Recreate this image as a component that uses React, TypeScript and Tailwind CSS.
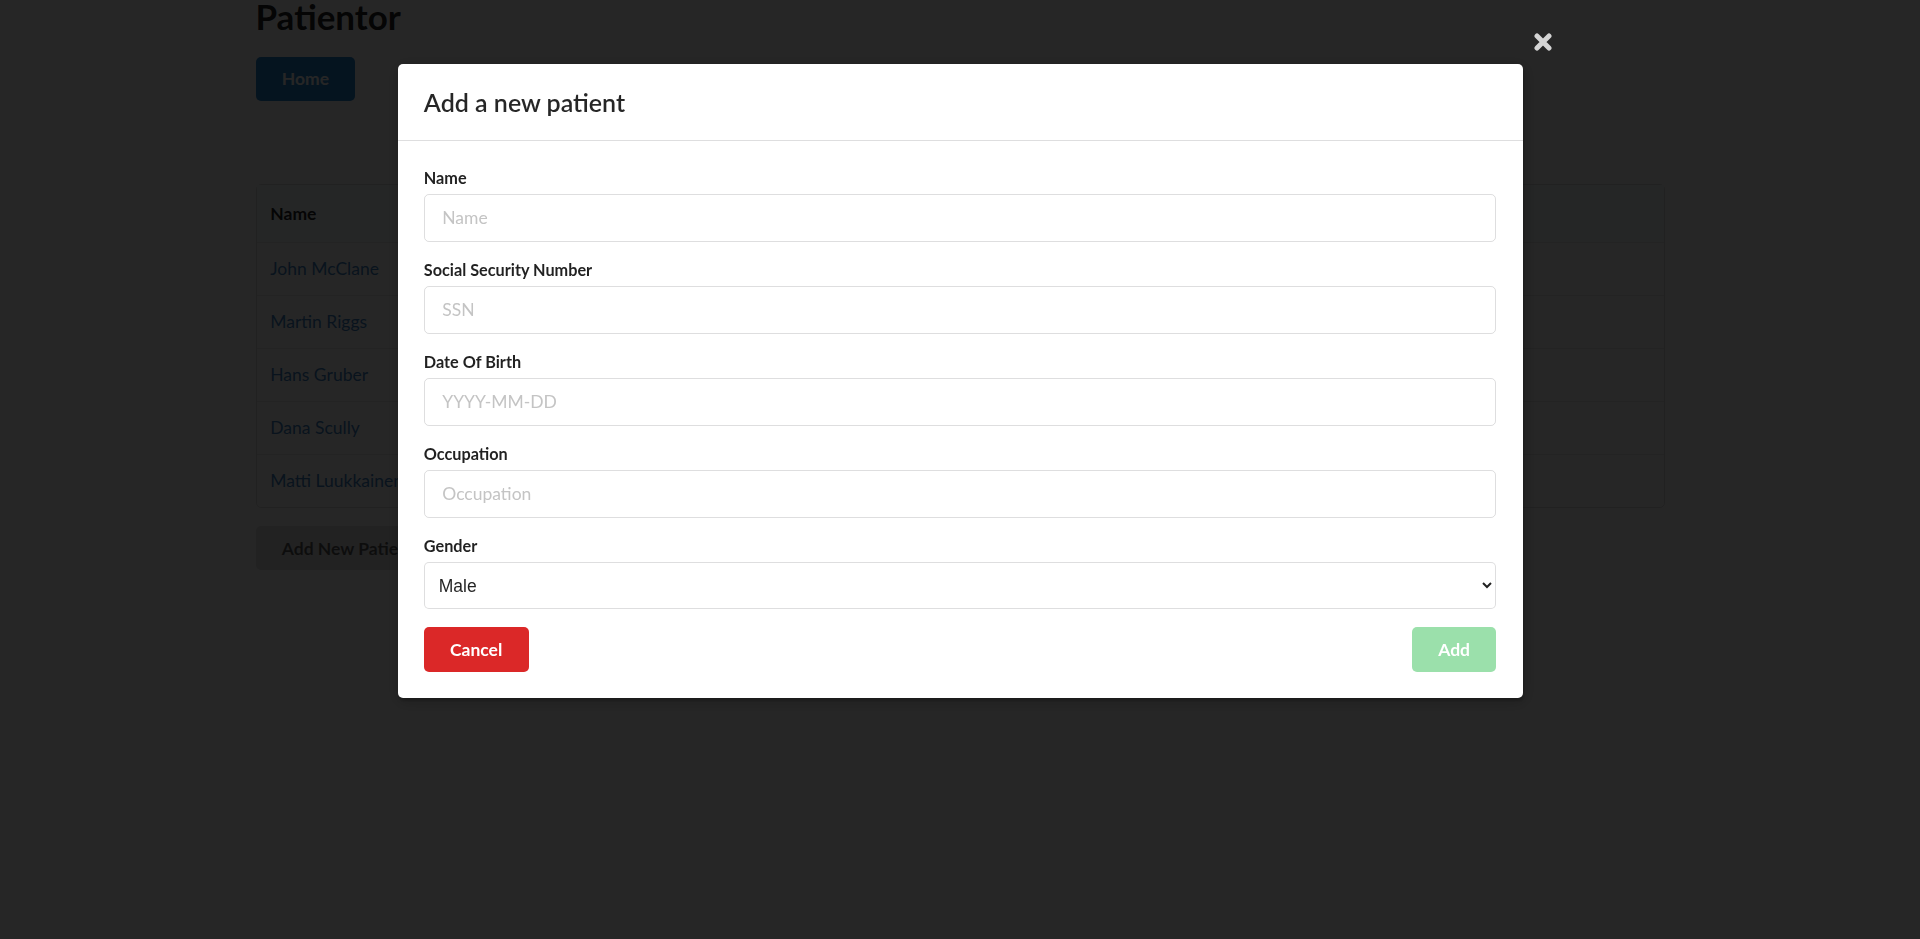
import React from "react";

const patients = [
  { name: "John McClane", gender: "male", occupation: "New york city cop" },
  { name: "Martin Riggs", gender: "male", occupation: "Cop" },
  { name: "Hans Gruber", gender: "other", occupation: "Technician" },
  { name: "Dana Scully", gender: "female", occupation: "Forensic Pathologist" },
  { name: "Matti Luukkainen", gender: "male", occupation: "Digital evangelist" },
];

const fields = [
  { label: "Name", placeholder: "Name" },
  { label: "Social Security Number", placeholder: "SSN" },
  { label: "Date Of Birth", placeholder: "YYYY-MM-DD" },
  { label: "Occupation", placeholder: "Occupation" },
];

export default function App() {
  return (
    <div
      className="min-h-[939px] bg-white text-[17.5px] leading-[25px] text-[rgba(0,0,0,0.87)]"
      style={{ fontFamily: "Lato, 'Helvetica Neue', Arial, Helvetica, sans-serif" }}
    >
      <div className="mx-auto w-[1409px]">
        <h1 className="-mt-[6px] mb-[17.5px] text-[35px] leading-[45px] font-bold">Patientor</h1>
        <button className="h-[44px] rounded-[5px] bg-[#2185d0] px-[26.25px] text-[17.5px] font-bold text-white">
          Home
        </button>
        <div className="mt-[36px] mb-[18px] text-center text-[22.5px] leading-[29px] font-bold">Patient list</div>
        <table className="w-full border-separate border-spacing-0 rounded-[5px] border border-[rgba(34,36,38,0.15)] text-left">
          <thead>
            <tr className="bg-[#f9fafb]">
              {["Name", "Gender", "Occupation", "Health Rating"].map((h, i) => (
                <th
                  key={h}
                  className={`w-1/4 px-[13.75px] py-[16.25px] leading-[25px] font-bold ${
                    i > 0 ? "border-l border-[rgba(34,36,38,0.1)]" : ""
                  }`}
                >
                  {h}
                </th>
              ))}
            </tr>
          </thead>
          <tbody>
            {patients.map((p) => (
              <tr key={p.name}>
                <td className="border-t border-[rgba(34,36,38,0.1)] px-[13.75px] py-[13.75px] leading-[24.5px] text-[#4183c4]">
                  {p.name}
                </td>
                <td className="border-t border-l border-[rgba(34,36,38,0.1)] px-[13.75px] py-[13.75px] leading-[24.5px]">
                  {p.gender}
                </td>
                <td className="border-t border-l border-[rgba(34,36,38,0.1)] px-[13.75px] py-[13.75px] leading-[24.5px]">
                  {p.occupation}
                </td>
                <td className="border-t border-l border-[rgba(34,36,38,0.1)] px-[13.75px] py-[13.75px] leading-[24.5px]"></td>
              </tr>
            ))}
          </tbody>
        </table>
        <button className="mt-[18px] h-[44px] rounded-[5px] bg-[#e0e1e2] px-[26.25px] text-[17.5px] font-bold text-[rgba(0,0,0,0.6)]">
          Add New Patient
        </button>
      </div>

      {/* Dimmer + modal */}
      <div className="fixed inset-0 flex items-start justify-center bg-[rgba(0,0,0,0.85)]">
        <div className="relative mt-[64px] w-[1125px] rounded-[5px] bg-white shadow-[1px_3px_3px_0_rgba(0,0,0,0.2),1px_3px_15px_2px_rgba(0,0,0,0.2)]">
          <button className="absolute -top-[31px] -right-[29px] h-[18px] w-[18px]" aria-label="close">
            <svg width="18" height="18" viewBox="0 0 18 18">
              <path d="M3 3 L15 15 M15 3 L3 15" stroke="#d4d4d4" strokeWidth="5" strokeLinecap="round" />
            </svg>
          </button>
          <div className="rounded-t-[5px] border-b border-[rgba(34,36,38,0.15)] px-[26.25px] py-[21.875px] text-[25px] leading-[32px] font-semibold text-[rgba(0,0,0,0.85)]">
            Add a new patient
          </div>
          <div className="p-[26.25px]">
            {fields.map((f) => (
              <div key={f.label} className="mb-[17.5px]">
                <label className="mb-[5px] block text-[16.25px] leading-[22px] font-bold text-[rgba(0,0,0,0.87)]">
                  {f.label}
                </label>
                <input
                  placeholder={f.placeholder}
                  className="block h-[47.5px] w-full rounded-[5px] border border-[rgba(34,36,38,0.15)] px-[17.5px] text-[17.5px] text-[rgba(0,0,0,0.87)] outline-none placeholder:text-[#c4c4c4]"
                />
              </div>
            ))}
            <div className="mb-[17.5px]">
              <label className="mb-[5px] block text-[16.25px] leading-[22px] font-bold text-[rgba(0,0,0,0.87)]">
                Gender
              </label>
              <select
                defaultValue="male"
                className="block h-[47px] w-full rounded-[5px] border border-[rgba(34,36,38,0.15)] bg-white pl-[10px] pr-[8px] text-[17.5px] text-[rgba(0,0,0,0.87)]"
                style={{ fontFamily: "'Liberation Sans', Arial, sans-serif" }}
              >
                <option value="male">Male</option>
                <option value="female">Female</option>
                <option value="other">Other</option>
              </select>
            </div>
            <div className="flex items-center justify-between">
              <button className="h-[45px] rounded-[5px] bg-[#db2828] px-[26.25px] text-[17.5px] font-bold text-white">
                Cancel
              </button>
              <button
                disabled
                className="h-[45px] rounded-[5px] bg-[#9be0ab] px-[26.25px] text-[17.5px] font-bold text-white"
              >
                Add
              </button>
            </div>
          </div>
        </div>
      </div>
    </div>
  );
}
